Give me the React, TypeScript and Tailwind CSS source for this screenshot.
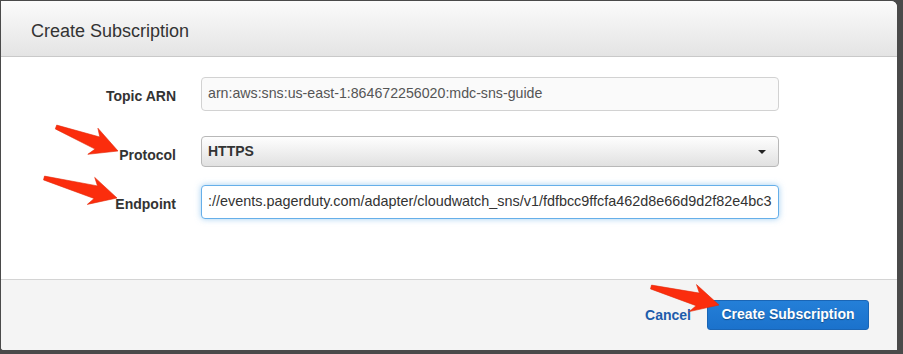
import React from "react";

type Pt = [number, number];

// Skitch-style callout arrow, tail -> tip
const arrowPoints = (tail: Pt, tip: Pt) => {
  const dx = tip[0] - tail[0];
  const dy = tip[1] - tail[1];
  const L = Math.hypot(dx, dy);
  const ux = dx / L;
  const uy = dy / L;
  const local: Pt[] = [
    [0, -2],
    [L - 22, -6.5],
    [L - 27, -14],
    [L, 0],
    [L - 27, 14],
    [L - 22, 6.5],
    [0, 2],
  ];
  return local
    .map(([a, b]) => `${(tail[0] + a * ux - b * uy).toFixed(1)},${(tail[1] + a * uy + b * ux).toFixed(1)}`)
    .join(" ");
};

const arrows: { tail: Pt; tip: Pt }[] = [
  { tail: [56, 127], tip: [118, 151] },
  { tail: [44, 178], tip: [117, 198] },
  { tail: [651, 287], tip: [719, 305] },
];

const App: React.FC = () => {
  return (
    <div
      className="relative w-[903px] h-[354px] bg-[#4a4a4a] pt-[1px] pl-[1px] overflow-hidden"
      style={{ fontFamily: '"Liberation Sans", Arial, sans-serif' }}
    >
      <div className="w-[896px] h-[349px] flex flex-col bg-white rounded-tr-[6px] rounded-bl-[3px] overflow-hidden">
        {/* header */}
        <div className="h-[56px] shrink-0 flex items-center pl-[30px] pt-[6px] bg-gradient-to-b from-[#fbfbfb] to-[#e4e4e4] border-b border-[#c9c9c9]">
          <h2 className="text-[18px] text-[#333]">Create Subscription</h2>
        </div>

        {/* body */}
        <div className="flex-1 bg-white pt-[20px] border-b border-[#d4d4d4]">
          <div className="flex items-center">
            <label className="w-[175px] text-right text-[14px] font-bold text-[#333] pt-[4px]">Topic ARN</label>
            <div className="ml-[25px] w-[578px] h-[34px] flex items-center px-[6px] rounded-[4px] border border-[#d2d2d2] bg-[#fafafa] text-[14.2px] text-[#555]">
              arn:aws:sns:us-east-1:864672256020:mdc-sns-guide
            </div>
          </div>

          <div className="flex items-center mt-[25px]">
            <label className="w-[175px] text-right text-[14px] font-bold text-[#333] pt-[7px]">Protocol</label>
            <div className="ml-[25px] w-[578px] h-[31px] flex items-center justify-between pl-[6px] pr-[12px] rounded-[4px] border border-[#b8b8b8] bg-gradient-to-b from-[#fefefe] to-[#e1e1e1] text-[14px] font-bold text-[#333]">
              <span>HTTPS</span>
              <span className="w-0 h-0 border-l-[4px] border-r-[4px] border-t-[4px] border-l-transparent border-r-transparent border-t-[#222]" />
            </div>
          </div>

          <div className="flex items-center mt-[18px]">
            <label className="w-[175px] text-right text-[14px] font-bold text-[#333] pt-[5px]">Endpoint</label>
            <div className="ml-[25px] w-[578px] h-[34px] flex items-center px-[6px] rounded-[4px] border border-[#66afe9] bg-white text-[14.4px] text-[#333] whitespace-nowrap overflow-hidden shadow-[0_0_6px_rgba(102,175,233,0.6)]">
              ://events.pagerduty.com/adapter/cloudwatch_sns/v1/fdfbcc9ffcfa462d8e66d9d2f82e4bc3
            </div>
          </div>
        </div>

        {/* footer */}
        <div className="h-[70px] shrink-0 bg-[#f4f4f4] flex items-center justify-end pr-[28px] gap-[16px] pb-[1px]">
          <a href="#" className="text-[14px] font-bold text-[#1d5cab] pt-[1px]">Cancel</a>
          <button className="h-[30px] w-[162px] rounded-[3px] border border-[#1a65b5] bg-gradient-to-b from-[#247fd8] to-[#1b72cc] text-[14px] font-bold text-white [text-shadow:0_1px_1px_rgba(0,0,0,0.35)]">
            Create Subscription
          </button>
        </div>
      </div>

      {/* annotation arrows */}
      <svg className="absolute inset-0 pointer-events-none" width="903" height="354">
        {arrows.map((a, i) => (
          <polygon key={i} points={arrowPoints(a.tail, a.tip)} fill="#fb2d0d" stroke="#e22808" strokeWidth="0.6" strokeLinejoin="round" />
        ))}
      </svg>
    </div>
  );
};

export default App;
